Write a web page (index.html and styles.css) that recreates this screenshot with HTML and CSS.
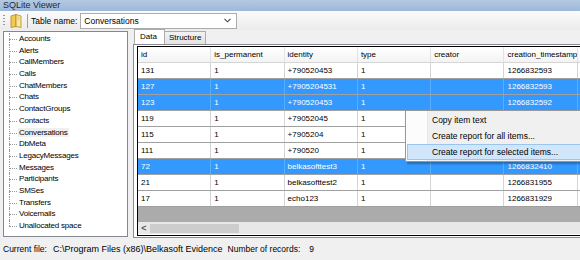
FILE: index.html
```html
<!DOCTYPE html>
<html lang="en">
  <head>
    <meta charset="UTF-8" />
    <title>SQLite Viewer</title>
    <link rel="stylesheet" href="styles.css">
  </head>
  <body>
    <div class="window">
      <div class="titlebar">SQLite Viewer</div>
      <div class="toolbar">
        <span class="grip"></span>
        <svg class="book" width="12" height="14" viewBox="0 0 12 14">
          <path d="M1 2 L6 0.5 L6 12.5 L1 13.5 Z" fill="#f3c94f" stroke="#b8891e" stroke-width="0.8"/>
          <path d="M6 0.5 L11 2 L11 13.5 L6 12.5 Z" fill="#fbe7a3" stroke="#b8891e" stroke-width="0.8"/>
          <path d="M7.5 3 L9.5 3.6 M7.5 5 L9.5 5.6" stroke="#c79b35" stroke-width="0.6"/>
        </svg>
        <span class="sep"></span>
        <span class="label">Table name:</span>
        <div class="combo">
          <span>Conversations</span>
          <svg width="7" height="5" viewBox="0 0 7 5"><path d="M0.5 0.8 L3.5 3.8 L6.5 0.8" fill="none" stroke="#444" stroke-width="1.1"/></svg>
        </div>
      </div>
      <div class="main">
        <ul class="tree">
          <li>Accounts</li>
          <li>Alerts</li>
          <li>CallMembers</li>
          <li>Calls</li>
          <li>ChatMembers</li>
          <li>Chats</li>
          <li>ContactGroups</li>
          <li>Contacts</li>
          <li class="current"><span>Conversations</span></li>
          <li>DbMeta</li>
          <li>LegacyMessages</li>
          <li>Messages</li>
          <li>Participants</li>
          <li>SMSes</li>
          <li>Transfers</li>
          <li>Voicemails</li>
          <li class="last">Unallocated space</li>
        </ul>
        <div class="right">
          <div class="tabs">
            <span class="tab active">Data</span>
            <span class="tab">Structure</span>
          </div>
          <div class="page">
            <div class="grid">
              <table>
                <thead>
                  <tr><th>id</th><th>is_permanent</th><th>identity</th><th>type</th><th>creator</th><th>creation_timestamp</th><th></th></tr>
                </thead>
                <tbody>
                  <tr><td>131</td><td>1</td><td>+790520453</td><td>1</td><td></td><td>1266832593</td><td></td></tr>
                  <tr class="sel"><td>127</td><td>1</td><td>+7905204531</td><td>1</td><td></td><td>1266832593</td><td></td></tr>
                  <tr class="sel"><td>123</td><td>1</td><td>+790520453</td><td>1</td><td></td><td>1266832592</td><td></td></tr>
                  <tr><td>119</td><td>1</td><td>+79052045</td><td>1</td><td></td><td>1266832592</td><td></td></tr>
                  <tr><td>115</td><td>1</td><td>+7905204</td><td>1</td><td></td><td>1266832591</td><td></td></tr>
                  <tr><td>111</td><td>1</td><td>+790520</td><td>1</td><td></td><td>1266832590</td><td></td></tr>
                  <tr class="sel"><td>72</td><td>1</td><td>belkasofttest3</td><td>1</td><td></td><td>1266832410</td><td></td></tr>
                  <tr><td>21</td><td>1</td><td>belkasofttest2</td><td>1</td><td></td><td>1266831955</td><td></td></tr>
                  <tr><td>17</td><td>1</td><td>echo123</td><td>1</td><td></td><td>1266831929</td><td></td></tr>
                </tbody>
              </table>
              <div class="empty"></div>
              <div class="hscroll">
                <span class="arrow">&lt;</span>
                <span class="thumb"></span>
              </div>
            </div>
          </div>
        </div>
        <ul class="menu">
          <li>Copy item text</li>
          <li>Create report for all items...</li>
          <li class="hot">Create report for selected items...</li>
        </ul>
      </div>
      <div class="statusbar">
        <span>Current file:</span>
        <span class="path">C:\Program Files (x86)\Belkasoft Evidence</span>
        <span>Number of records:</span>
        <span class="count">9</span>
      </div>
    </div>
  </body>
</html>
```
FILE: styles.css
```css
body {
  margin: 0;
  font-family: "Liberation Sans", Arial, sans-serif;
  font-size: 8px;
  color: #000;
  background: #f0f0f0;
}

.window {
  width: 580px;
  height: 260px;
  overflow: hidden;
  display: flex;
  flex-direction: column;
}

.titlebar {
  height: 11px;
  line-height: 11px;
  padding-left: 3px;
  font-size: 9px;
  color: #1e2a3a;
  background: linear-gradient(#b3c9e2, #9db8d8);
}

.toolbar {
  height: 19px;
  display: flex;
  align-items: center;
  background: linear-gradient(#fbfbfb, #ebebeb);
}

.grip {
  width: 2px;
  height: 12px;
  margin-left: 3px;
  background: repeating-linear-gradient(#9a9a9a 0 1px, transparent 1px 3px);
}

.book {
  margin-left: 5px;
}

.sep {
  width: 1px;
  height: 14px;
  margin: 0 3px 0 5px;
  background: #a0a0a0;
}

.label {
  font-size: 8.5px;
}

.combo {
  margin-left: 3px;
  width: 147px;
  height: 14px;
  border: 1px solid #acacac;
  background: #fff;
  display: flex;
  align-items: center;
  justify-content: space-between;
  padding: 0 5px 0 3px;
  font-size: 8.5px;
}

.main {
  height: 207px;
  display: flex;
  padding-left: 3px;
  position: relative;
}

.tree {
  flex-shrink: 0;
  list-style: none;
  margin: 1px 0 0 0;
  padding: 1px 0 0 0;
  width: 123px;
  height: 203px;
  border: 1px solid #828790;
  background: #fff;
}

.tree li {
  position: relative;
  height: 11.7px;
  line-height: 11.7px;
  padding-left: 15px;
  letter-spacing: -0.2px;
  white-space: nowrap;
}

.tree li::before {
  content: "";
  position: absolute;
  left: 5px;
  top: 6px;
  width: 8px;
  border-top: 1px dotted #999;
}

.tree li::after {
  content: "";
  position: absolute;
  left: 5px;
  top: 0;
  height: 100%;
  border-left: 1px dotted #999;
}

.tree li.last::after {
  height: 6px;
}

.tree li.current span {
  background: #efefef;
  padding: 0 1px;
  margin-left: -1px;
}

.right {
  flex: 1;
  min-width: 0;
  margin-left: 5px;
  display: flex;
  flex-direction: column;
}

.tabs {
  height: 14px;
  display: flex;
  align-items: flex-end;
  padding-left: 1px;
}

.tab {
  height: 12px;
  line-height: 12px;
  padding: 0 4px;
  border: 1px solid #acacac;
  border-bottom: none;
  background: linear-gradient(#f2f2f2, #e4e4e4);
}

.tab.active {
  height: 14px;
  line-height: 13px;
  padding: 0 7px 0 5px;
  background: #fff;
  margin-right: -1px;
  position: relative;
  z-index: 1;
}

.page {
  flex: 1;
  border: 1px solid #898c95;
  border-right: none;
  background: #fff;
  padding: 1px 0 1px 3px;
}

.grid {
  height: 188px;
  border: 1px solid #000;
  border-right: none;
  display: flex;
  flex-direction: column;
  overflow: hidden;
}

table {
  border-collapse: collapse;
  table-layout: fixed;
  width: 513px;
  flex-shrink: 0;
}

th, td {
  width: 69.3px;
  height: 15px;
  padding: 0 0 0 3px;
  text-align: left;
  font-weight: normal;
  white-space: nowrap;
  overflow: hidden;
  border-right: 1px solid #d4d4d4;
  border-bottom: 1px solid #a0a0a0;
}

th {
  background: linear-gradient(#fff, #f3f3f3);
  border-right: 1px solid #e3e3e3;
  border-bottom: 1px solid #d5d5d5;
}

tr.sel td {
  background: #3399ff;
  color: #fff;
  border-right-color: #5aaeff;
}

.empty {
  height: 15px;
  background: #ababab;
}

.hscroll {
  height: 12px;
  background: #e8e8e8;
  display: flex;
  align-items: center;
}

.arrow {
  width: 12px;
  text-align: center;
  font-size: 9px;
  font-weight: bold;
  color: #555;
}

.thumb {
  width: 89px;
  height: 9px;
  background: #cdcdcd;
}

.menu {
  position: absolute;
  left: 405px;
  top: 80px;
  width: 180px;
  margin: 0;
  padding: 1px 0;
  list-style: none;
  border: 1px solid #979797;
  background: linear-gradient(90deg, #fcfcfc 0 21px, #e8e8e8 21px 22px, #f0f0f0 22px);
  box-shadow: 2px 2px 2px rgba(0, 0, 0, 0.3);
  font-size: 8.5px;
}

.menu li {
  height: 16px;
  line-height: 16px;
  padding-left: 25px;
  margin: 0 1px;
}

.menu li.hot {
  background: #d1e6fb;
  height: 14px;
  line-height: 14px;
  border: 1px solid #99c6f1;
  padding-left: 24px;
}

.statusbar {
  height: 23px;
  display: flex;
  align-items: center;
  padding-left: 3px;
  font-size: 8.5px;
  background: #f0f0f0;
}

.path {
  font-size: 9px;
  margin: 0 5px 0 6px;
}

.count {
  margin-left: 9px;
}
```
